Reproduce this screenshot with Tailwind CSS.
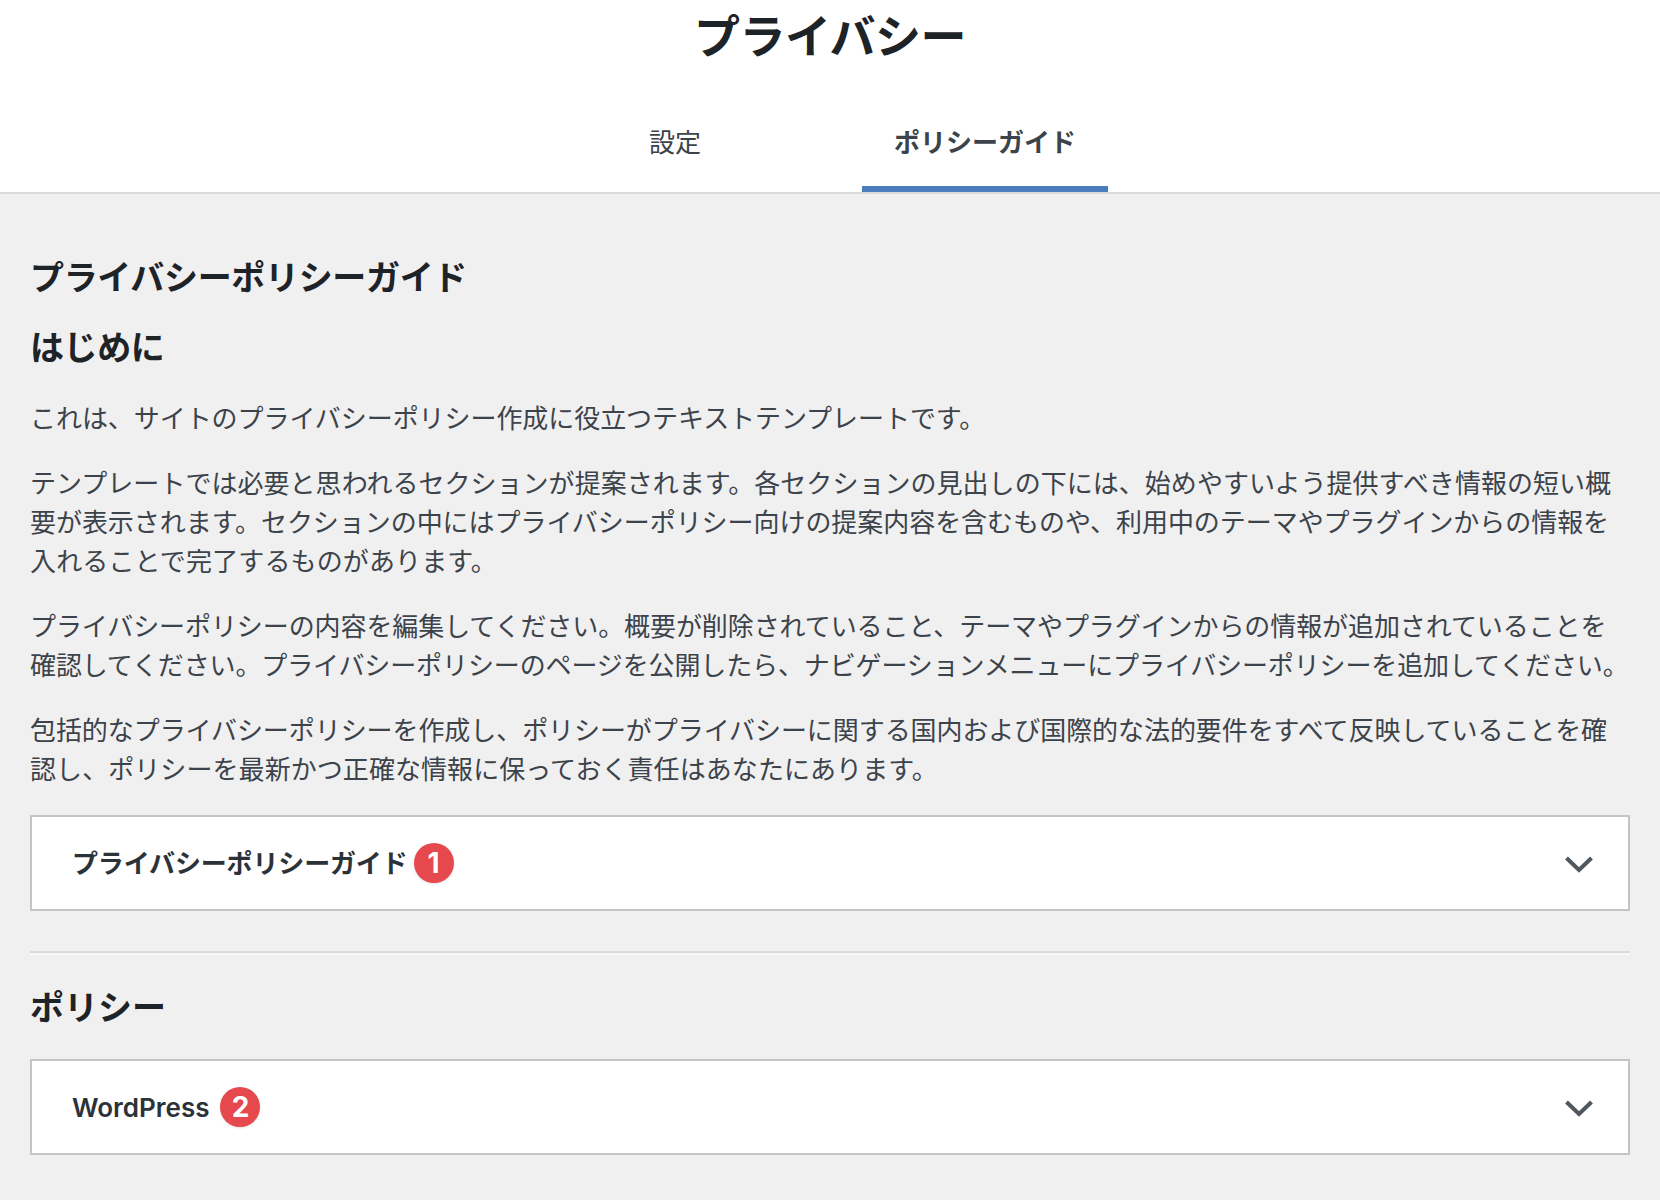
<!DOCTYPE html>
<html lang="ja">
<head>
    <meta charset="UTF-8">
    <title>プライバシー</title>
    <script src="https://cdn.jsdelivr.net/npm/@tailwindcss/browser@4"></script>
</head>
<body class="bg-[#f0f0f1] text-[#3c434a] text-[26px] leading-[39px] [font-family:Inter,'Noto_Sans_CJK_JP',sans-serif]">

    <!-- Header -->
    <header class="bg-white border-b-2 border-[#dcdcde] h-[194px]">
        <h1 class="pt-[8px] h-[112px] text-center text-[46px] leading-[56px] font-semibold tracking-[-0.5px] text-[#1d2327]">プライバシー</h1>
        <nav class="flex justify-center gap-16 h-[80px]">
            <a href="#" class="w-[246px] pt-[11px] text-center">設定</a>
            <a href="#" class="w-[246px] pt-[11px] text-center font-semibold border-b-[6px] border-[#4a7dbf]">ポリシーガイド</a>
        </nav>
    </header>

    <main class="px-[30px] pt-[61px]">
        <h2 class="text-[34px] leading-[46px] font-semibold tracking-[-0.33px] text-[#1d2327]">プライバシーポリシーガイド</h2>
        <h3 class="mt-[24px] text-[34px] leading-[46px] font-semibold tracking-[-0.4px] text-[#1d2327]">はじめに</h3>

        <!-- line breaks as in the original, spacing set per line -->
        <div class="whitespace-nowrap">
            <p class="mt-[28px] tracking-[-0.06px]">これは、サイトのプライバシーポリシー作成に役立つテキストテンプレートです。</p>
            <p class="mt-[26px]">
                <span class="block tracking-[0.035px]">テンプレートでは必要と思われるセクションが提案されます。各セクションの見出しの下には、始めやすいよう提供すべき情報の短い概</span>
                <span class="block tracking-[-0.05px]">要が表示されます。セクションの中にはプライバシーポリシー向けの提案内容を含むものや、利用中のテーマやプラグインからの情報を</span>
                <span class="block tracking-[0.13px]">入れることで完了するものがあります。</span>
            </p>
            <p class="mt-[26px]">
                <span class="block tracking-[-0.08px]">プライバシーポリシーの内容を編集してください。概要が削除されていること、テーマやプラグインからの情報が追加されていることを</span>
                <span class="block tracking-[-0.12px]">確認してください。プライバシーポリシーのページを公開したら、ナビゲーションメニューにプライバシーポリシーを追加してください。</span>
            </p>
            <p class="mt-[26px]">
                <span class="block tracking-[-0.07px]">包括的なプライバシーポリシーを作成し、ポリシーがプライバシーに関する国内および国際的な法的要件をすべて反映していることを確</span>
                <span class="block tracking-[0.07px]">認し、ポリシーを最新かつ正確な情報に保っておく責任はあなたにあります。</span>
            </p>
        </div>

        <!-- Guide accordion -->
        <button class="mt-[26px] w-full h-[96px] pl-[40px] pr-[35px] flex items-center justify-between bg-white border-2 border-[#c3c4c7] font-semibold text-[#2c3338]">
            <span class="flex items-center">
                <span class="tracking-[-0.15px]">プライバシーポリシーガイド</span>
                <span class="ml-[6px] w-[40px] h-[40px] rounded-full bg-[#e5484d] text-white text-[28px] font-bold flex items-center justify-center shadow-sm">1</span>
            </span>
            <svg class="mt-[4px]" width="28" height="18" viewBox="0 0 28 18" fill="none" stroke="#50575e" stroke-width="4"><path d="M1.5 2 14 14 26.5 2"/></svg>
        </button>

        <hr class="mt-[40px] border-t-2 border-b-2 border-t-[#dcdcde] border-b-[#f6f7f7]">

        <h2 class="mt-[30px] text-[34px] leading-[46px] font-semibold text-[#1d2327]">ポリシー</h2>

        <!-- Policy accordion -->
        <button class="mt-[28px] w-full h-[96px] pl-[40px] pr-[35px] flex items-center justify-between bg-white border-2 border-[#c3c4c7] font-semibold text-[#2c3338]">
            <span class="flex items-center">
                <span>WordPress</span>
                <span class="ml-[11px] w-[40px] h-[40px] rounded-full bg-[#e5484d] text-white text-[28px] font-bold flex items-center justify-center shadow-sm">2</span>
            </span>
            <svg class="mt-[4px]" width="28" height="18" viewBox="0 0 28 18" fill="none" stroke="#50575e" stroke-width="4"><path d="M1.5 2 14 14 26.5 2"/></svg>
        </button>
    </main>

</body>
</html>
